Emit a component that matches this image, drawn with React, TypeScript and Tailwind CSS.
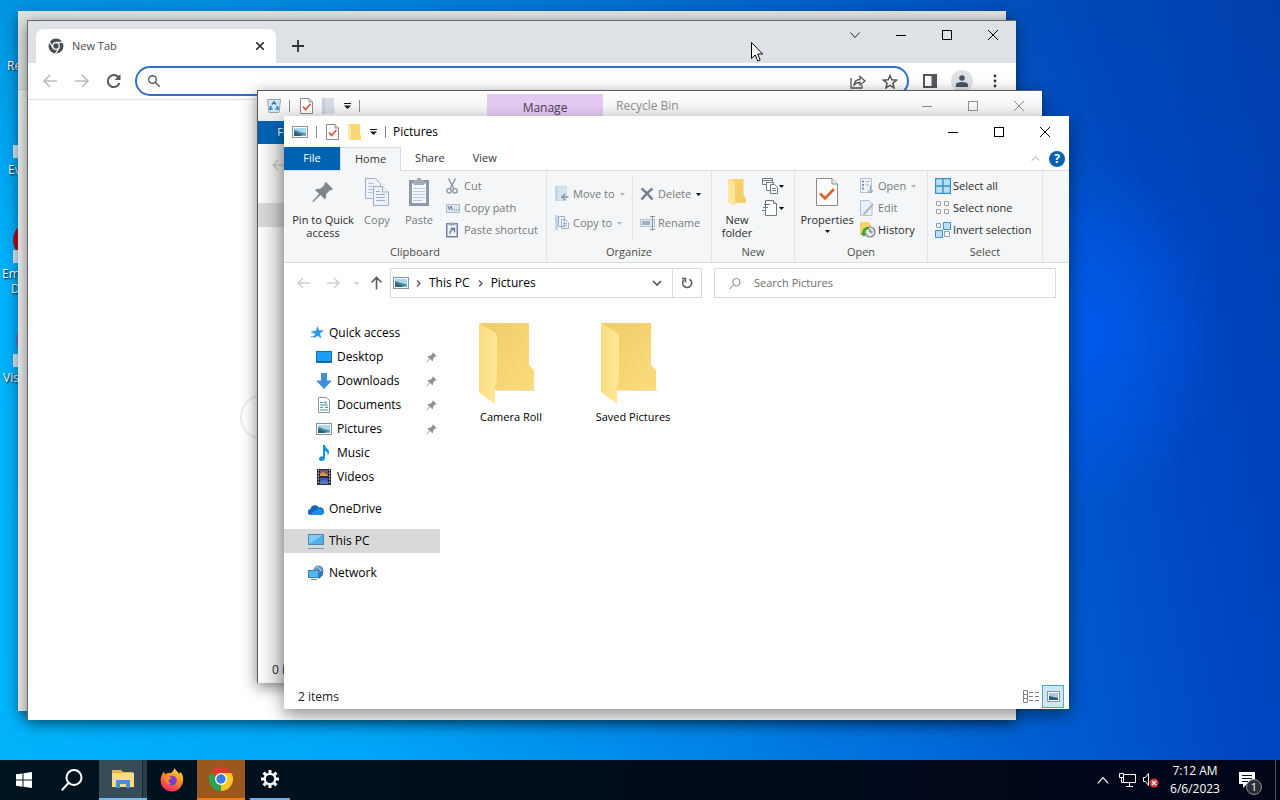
import React, { useState } from 'react';

type IconProps = { className?: string };

/* ---------- window glyphs ---------- */

function MinimizeIcon() {
  return (
    <svg width="10" height="10" viewBox="0 0 10 10" stroke="currentColor">
      <path d="M0 5.5h10" />
    </svg>
  );
}

function MaximizeIcon() {
  return (
    <svg width="10" height="10" viewBox="0 0 10 10" fill="none" stroke="currentColor">
      <rect x="0.5" y="0.5" width="9" height="9" />
    </svg>
  );
}

function CloseIcon() {
  return (
    <svg width="10" height="10" viewBox="0 0 10 10" stroke="currentColor">
      <path d="M0 0l10 10M10 0L0 10" />
    </svg>
  );
}

function Caret({ className = 'text-black' }: IconProps) {
  return (
    <svg className={`shrink-0 ${className}`} width="5" height="3" viewBox="0 0 5 3" fill="currentColor">
      <path d="M0 0h5L2.5 3z" />
    </svg>
  );
}

function ChevronDown({ className }: IconProps) {
  return (
    <svg className={className} width="10" height="6" viewBox="0 0 10 6" fill="none" stroke="currentColor">
      <path d="M0.5 0.5L5 5.5L9.5 0.5" />
    </svg>
  );
}

function WindowButtons({ className = 'text-black' }: IconProps) {
  return (
    <div className={`flex h-7 ${className}`}>
      <button aria-label="Minimize" className="flex w-[46px] items-center justify-center">
        <MinimizeIcon />
      </button>
      <button aria-label="Maximize" className="flex w-[46px] items-center justify-center">
        <MaximizeIcon />
      </button>
      <button aria-label="Close" className="flex w-[46px] items-center justify-center">
        <CloseIcon />
      </button>
    </div>
  );
}

/* ---------- explorer icons ---------- */

function PictureIcon() {
  return (
    <svg className="shrink-0" width="16" height="12" viewBox="0 0 16 12">
      <rect x="0.5" y="0.5" width="15" height="11" fill="#fff" stroke="#8a949c" />
      <rect x="2" y="2" width="12" height="8" fill="#a9d8f3" />
      <path d="M2 4c2-.5 4 1 6 2l6 1.500V10H2z" fill="#4f8aa3" />
      <path d="M2 6c2 0 4 1 5 2l5 1 2 1H2z" fill="#2f5f70" />
      <path d="M8 10c2-1.500 4-1.500 6-1.500V10z" fill="#6fb3d8" />
    </svg>
  );
}

function CheckPageIcon({ large = false }: { large?: boolean }) {
  return (
    <svg
      className="shrink-0"
      width={large ? 22 : 13}
      height={large ? 30 : 16}
      viewBox={large ? '0 0 22 30' : '0 0 13 16'}
      fill="none"
    >
      {large ? (
        <>
          <path d="M0.500 1.500H16L21.500 7v21.500H0.500z" fill="#fdfdfd" stroke="#8b8b8b" />
          <path d="M16 1.500V7h5.500" fill="#eee" stroke="#8b8b8b" />
          <path d="M4 16.500l5 5L18 12" stroke="#e0602a" strokeWidth="2.600" />
        </>
      ) : (
        <>
          <path d="M0.500 0.500H9L12.500 4v11.500H0.500z" fill="#fdfdfd" stroke="#8b8b8b" />
          <path d="M9 0.500V4h3.500" stroke="#8b8b8b" />
          <path d="M3 8.500l2.500 3L10.500 6" stroke="#cf4f38" strokeWidth="1.500" />
        </>
      )}
    </svg>
  );
}

function SmallFolderIcon({ muted = false }: { muted?: boolean }) {
  return (
    <svg className="shrink-0" width="13" height="16" viewBox="0 0 13 16">
      <path d="M0 0h12v10l1 1v5H0z" fill={muted ? '#d3dce4' : '#f8d775'} />
      <path d="M0 0l3 2v14H0z" fill={muted ? '#c3ced8' : '#ffe9a2'} />
    </svg>
  );
}

function OverflowIcon() {
  return (
    <svg className="shrink-0" width="7" height="6" viewBox="0 0 7 6">
      <path d="M0 0.500h7" stroke="#111" />
      <path d="M0 2.500h7L3.500 6z" fill="#111" />
    </svg>
  );
}

function PinIcon({ className }: IconProps) {
  return (
    <svg className={`shrink-0 ${className}`} viewBox="0 0 22 22" fill="currentColor">
      <path d="M14 1l7 7-2 1.500-1-.5-4 4.500c.5 2 .2 3.500-1 5L8.500 14 1 21.200.2 20.500 7 12.800 3 9c1.500-1.300 3-1.500 5-1l4.500-4-.5-1z" />
    </svg>
  );
}

function CopyIcon() {
  return (
    <svg width="24" height="30" viewBox="0 0 24 30" fill="#eef2f9" stroke="#a3b0c6">
      <path d="M0.500 1.500h10l5 5v15h-15z" />
      <path d="M3 6.500h6M3 9.500h9M3 12.500h9M3 15.500h5" stroke="#b5c3db" />
      <path d="M8.500 9.500h9l6 5.500v13.500h-15z" />
      <path d="M17.500 9.500V15h6M11 14.500h4M11 17.500h9M11 20.500h9M11 23.500h9" stroke="#9fb0cc" />
    </svg>
  );
}

function PasteIcon() {
  return (
    <svg width="20" height="30" viewBox="0 0 20 30" fill="none">
      <rect x="0.750" y="3.750" width="18.500" height="24.500" fill="#8e9db6" stroke="#8795ad" strokeWidth="1.500" />
      <path d="M3 6.500h14V26H3z" fill="#f4f7fb" />
      <path d="M4 11.500h12M4 14.500h12M4 17.500h12M4 20.500h12M4 23.500h9" stroke="#b9c6dc" />
      <path d="M5 3h3V1h4v2h3v5H5z" fill="#a7abb2" />
    </svg>
  );
}

function CutIcon() {
  return (
    <svg width="12" height="16" viewBox="0 0 12 16" fill="none" stroke="#8f98a5">
      <path d="M2.500 0.500L8 11M9.500 0.500L4 11" strokeWidth="1.500" />
      <circle cx="3" cy="12.800" r="2.200" strokeWidth="1.400" />
      <circle cx="9" cy="12.800" r="2.200" strokeWidth="1.400" />
    </svg>
  );
}

function CopyPathIcon() {
  return (
    <svg width="14" height="9" viewBox="0 0 14 9" fill="none">
      <rect x="0.500" y="0.500" width="13" height="8" fill="#dfe5f1" stroke="#b3bdd0" />
      <path d="M2 2l1.500 4L5 2l1.500 4M8 6h1M10 6h1M12 6h1" stroke="#6b7c9c" />
    </svg>
  );
}

function PasteShortcutIcon() {
  return (
    <svg width="12" height="16" viewBox="0 0 12 16" fill="none">
      <rect x="0.750" y="1.750" width="10.500" height="13" fill="#eef2fa" stroke="#74849f" strokeWidth="1.500" />
      <path d="M3.500 0.500h5v3h-5z" fill="#9aa5b7" />
      <path d="M4 12V9.500L7.500 7M4.500 6.500h4v4" stroke="#5f7396" strokeWidth="1.300" />
    </svg>
  );
}

function MoveToIcon() {
  return (
    <svg width="14" height="16" viewBox="0 0 14 16" fill="none">
      <path d="M0.500 0.500h11v14h-11z" fill="#d5e3ee" stroke="#c8d8e5" />
      <path d="M0 0h3v15H0z" fill="#bfd6e6" />
      <path d="M13.500 11h-6m2.500-3l-3 3 3 3" stroke="#8199b0" strokeWidth="1.600" />
    </svg>
  );
}

function CopyToIcon() {
  return (
    <svg width="14" height="16" viewBox="0 0 14 16" fill="#eef3fa">
      <path d="M0 0h3v15H0z" fill="#bfd6e6" />
      <path d="M3.500 1.500h6v10h-6zM6.500 4.500h4l3 3v6h-7z" stroke="#9fb0c8" />
      <path d="M8 8.500h4M8 10.500h4" stroke="#9fb0c8" />
    </svg>
  );
}

function DeleteIcon() {
  return (
    <svg width="14" height="14" viewBox="0 0 14 14" fill="none" stroke="#76808e" strokeWidth="2.600">
      <path d="M1.500 1.500C5 4 9 8 12.500 12.500M12.500 1.500C9 4 5 8 1.500 12.500" />
    </svg>
  );
}

function RenameIcon() {
  return (
    <svg width="16" height="14" viewBox="0 0 16 14" fill="none">
      <rect x="0.500" y="3.500" width="14" height="7" fill="#e4eaf4" stroke="#b8c4d6" />
      <path d="M2 5h8v4H2z" fill="#9fb0cb" />
      <path d="M10 0.500h5M12.500 0.500v13M10 13.500h5" stroke="#8592a6" />
    </svg>
  );
}

function NewFolderIcon() {
  return (
    <svg width="18" height="28" viewBox="0 0 18 28">
      <path d="M2 1h13.500v16l2.500 3v5H2z" fill="#f6cf6b" />
      <path d="M0 1h3l4 3v24l-5-3H0z" fill="#ffe59b" />
    </svg>
  );
}

function NewItemIcon() {
  return (
    <svg width="16" height="16" viewBox="0 0 16 16" fill="#fff" stroke="#6f7780">
      <path d="M0.500 0.500h10v6h-10z" />
      <path d="M0.500 2.500h10M4.500 4.500h7v8h-7z" />
      <path d="M8.500 6.500h4l3 3v6h-7zM10 10.500h4M10 12.500h4" />
    </svg>
  );
}

function EasyAccessIcon() {
  return (
    <svg width="16" height="16" viewBox="0 0 16 16" fill="#fff" stroke="#6f7780">
      <path d="M3.500 0.500h8l3 3v12h-11z" />
      <path d="M11.500 0.500v3h3M2 4.500h6M1 7.500h5M0 10.500h4" />
    </svg>
  );
}

function OpenIcon() {
  return (
    <svg width="14" height="16" viewBox="0 0 14 16" fill="none">
      <rect x="0.500" y="0.500" width="11" height="14" fill="#eff3f9" stroke="#b3c0d4" />
      <path d="M2 3.500h2M2 7h2M2 10.500h2" stroke="#7e90b0" strokeWidth="2" />
      <path d="M5.500 3.500h4M5.500 7h4" stroke="#a4b4cc" />
      <path d="M10.500 8v7M7.500 12l3 3 3-3" stroke="#8f9fb9" />
    </svg>
  );
}

function EditIcon() {
  return (
    <svg width="14" height="16" viewBox="0 0 14 16" fill="none">
      <path d="M0.500 0.500H9l3 3v12H0.500z" fill="#eaf0f8" stroke="#b3c0d4" />
      <path d="M13 4L5 13l-1.500 1" stroke="#9fafc5" strokeWidth="1.800" />
    </svg>
  );
}

function HistoryIcon() {
  return (
    <svg width="16" height="16" viewBox="0 0 16 16" fill="none">
      <path d="M0 0h9l2 3v10H0z" fill="#f6d26c" />
      <circle cx="10" cy="10" r="5" fill="#e4e6e8" stroke="#777d82" strokeWidth="1.200" />
      <path d="M10 7v3h2.500" stroke="#555" />
      <path d="M3 13c0-5 2-7 6-7" stroke="#3fa53a" strokeWidth="2.500" />
      <path d="M0.500 11h6L4 15z" fill="#3fa53a" />
    </svg>
  );
}

function SelectAllIcon() {
  return (
    <svg width="16" height="16" viewBox="0 0 16 16" fill="#b9e0f7" stroke="#3a8fcb">
      <path d="M0.500 0.500h15v15h-15zM8 0.500v15M0.500 8h15" strokeWidth="1.400" />
    </svg>
  );
}

function SelectNoneIcon() {
  return (
    <svg width="16" height="16" viewBox="0 0 16 16" fill="#fff" stroke="#a3a3a3">
      <path d="M1.500 1.500h4v4h-4zM9.500 1.500h4v4h-4zM1.500 9.500h4v4h-4zM9.500 9.500h4v4h-4z" />
    </svg>
  );
}

function InvertIcon() {
  return (
    <svg width="16" height="16" viewBox="0 0 16 16">
      <path d="M8.500 0.500h7v7h-7zM0.500 8.500h7v7h-7z" fill="#b9e0f7" stroke="#3a8fcb" />
      <path d="M1.500 1.500h4v4h-4zM9.500 9.500h5v5h-5z" fill="#fff" stroke="#8fa3b5" />
    </svg>
  );
}

function FolderIcon() {
  return (
    <svg width="64" height="82" viewBox="0 0 64 82" aria-hidden="true">
      <defs>
        <linearGradient id="folderBack" x1="0" y1="0" x2="1" y2="1">
          <stop offset="0" stopColor="#efcb68" />
          <stop offset="1" stopColor="#fbdc7c" />
        </linearGradient>
        <linearGradient id="folderFlap" x1="0" y1="0" x2="1" y2="0">
          <stop offset="0" stopColor="#fbdd80" />
          <stop offset="1" stopColor="#ffe798" />
        </linearGradient>
      </defs>
      <path d="M0 0h50v42l5 5v20H14z" fill="url(#folderBack)" />
      <path d="M17 67.500h40" stroke="#cfc7b0" strokeOpacity=".5" />
      <path d="M0 0l15 9c2 1 3 3 3 5v44l-2 4v19L0 69z" fill="url(#folderFlap)" />
    </svg>
  );
}

function StarIcon() {
  return (
    <svg width="16" height="14" viewBox="0 0 16 14">
      <path d="M9.500 0l1.600 4.300H16l-4 3.200 1.500 5-4-2.800L5.500 12.500l1.300-4.800L3 5h4.700z" fill="#2c9be0" />
      <path d="M3 7h3M3 10.500h3" stroke="#5aaee2" />
    </svg>
  );
}

function DesktopIcon() {
  return (
    <svg width="16" height="12" viewBox="0 0 16 12">
      <rect x="0.500" y="0.500" width="15" height="11" fill="#1e9df1" stroke="#1471b8" />
      <path d="M1 10.500h14" stroke="#0f5f9f" />
    </svg>
  );
}

function DownloadsIcon() {
  return (
    <svg width="16" height="16" viewBox="0 0 16 16">
      <path d="M5 0h6v7.500h5L8 16 0 7.500h5z" fill="#3f8fdc" />
    </svg>
  );
}

function DocumentsIcon() {
  return (
    <svg width="16" height="16" viewBox="0 0 16 16" fill="none">
      <path d="M2.500 0.500h8l3 3v12h-11z" fill="#fff" stroke="#8a949c" />
      <path d="M4 5.500h3M4 8h8M4 10.500h3M9 10.500h3M4 13h8" stroke="#3d9c96" />
      <path d="M8 4.500h3v2H8z" fill="#62aee0" />
    </svg>
  );
}

function MusicIcon() {
  return (
    <svg width="16" height="16" viewBox="0 0 16 16">
      <path d="M7 0h2c0 3 4 4 4 7 0 1.500-.5 2.500-1.200 3.500C12 8 10.500 6.500 9 6v7c0 2-1.500 3-3.300 3S3 15 3 13.700c0-1.700 2-2.700 4-2.200z" fill="#1693e0" />
    </svg>
  );
}

function VideosIcon() {
  return (
    <svg width="16" height="16" viewBox="0 0 16 16">
      <rect x="1" y="0" width="14" height="16" fill="#2b2d36" />
      <path d="M2.500 0.500v15M13.500 0.500v15" stroke="#d8d8d8" strokeDasharray="1.500 1.500" />
      <rect x="4" y="1" width="8" height="6" fill="#7a5668" />
      <path d="M4 5l3-2 5 3v1H4z" fill="#d09d45" />
      <rect x="4" y="9" width="8" height="6" fill="#3f57b5" />
      <path d="M4 13l4-2 4 2v2H4z" fill="#5a78c8" />
    </svg>
  );
}

function OneDriveIcon() {
  return (
    <svg width="16" height="11" viewBox="0 0 16 11">
      <path d="M3 11a3 3 0 01-.5-6A4.600 4.600 0 0111 3.500 3.800 3.800 0 0113 11z" fill="#1068bd" />
      <path d="M2 10.700L9 5c3-.8 6.500.5 7 3.200A2.700 2.700 0 0113.200 11H3z" fill="#1f8de0" />
    </svg>
  );
}

function ThisPcIcon() {
  return (
    <svg width="16" height="15" viewBox="0 0 16 15">
      <rect x="0.500" y="0.500" width="15" height="10" fill="#7fcdf6" stroke="#4d88ad" />
      <path d="M1 10L15 1v9z" fill="#4cb0ec" />
      <path d="M0 14.500h16" stroke="#7c98ad" />
    </svg>
  );
}

function NetworkIcon() {
  return (
    <svg width="16" height="16" viewBox="0 0 16 16">
      <circle cx="10.500" cy="5.500" r="5" fill="#5f94bd" />
      <path d="M8 2c2 0 4 1 5 4" stroke="#b5d6ea" fill="none" />
      <path d="M8 9l7-3v4l-4 4z" fill="#2f78b5" />
      <rect x="0.500" y="5.500" width="10" height="7" fill="#55b5f0" stroke="#3a7fae" />
      <path d="M3 14.500h6" stroke="#6a8da5" />
    </svg>
  );
}

function RecycleIcon() {
  return (
    <svg className="shrink-0" width="14" height="16" viewBox="0 0 14 16">
      <path d="M0.500 1.500h13l-1.500 13H2z" fill="#d4e6f1" stroke="#8ea5b3" />
      <path d="M5 6.500L7 4l2 2.500M10 8l1 3H8.500M5.500 11H3l1-3" stroke="#1f7cc7" strokeWidth="1.600" fill="none" />
    </svg>
  );
}

function RefreshIcon() {
  return (
    <svg width="12" height="12" viewBox="0 0 12 12" fill="none" stroke="#5b5b5b" strokeWidth="1.600">
      <path d="M8.500 2.200A4.500 4.500 0 113 2.800" />
      <path d="M1 1.500h3.500v4" />
    </svg>
  );
}

/* ---------- ribbon ---------- */

type RibbonButtonProps = {
  icon: React.ReactNode;
  label: string;
  disabled?: boolean;
  caret?: boolean;
  caretClass?: string;
};

function RibbonButton({ icon, label, disabled = false, caret = false, caretClass }: RibbonButtonProps) {
  return (
    <button
      disabled={disabled}
      className={`flex h-[22px] items-center whitespace-nowrap ${disabled ? 'text-[#76797d]' : 'text-[#2b2b2b]'}`}
    >
      <span className="flex w-[18px] shrink-0 items-center justify-start">{icon}</span>
      {label}
      {caret && <Caret className={`ml-[5px] ${caretClass ?? 'text-[#b5b8bc]'}`} />}
    </button>
  );
}

type LargeButtonProps = {
  icon: React.ReactNode;
  lines: string[];
  width: string;
  disabled?: boolean;
  caret?: boolean;
};

function LargeButton({ icon, lines, width, disabled = false, caret = false }: LargeButtonProps) {
  return (
    <button
      disabled={disabled}
      className={`flex flex-col items-center ${width} ${disabled ? 'text-[#76797d]' : 'text-[#2b2b2b]'}`}
    >
      <span className="mb-1 flex h-[34px] items-center">{icon}</span>
      {lines.map((line) => (
        <span key={line} className="leading-[13px] whitespace-nowrap">
          {line}
        </span>
      ))}
      {caret && <Caret className="mt-1 text-black" />}
    </button>
  );
}

function RibbonGroup({ title, width, children }: { title: string; width: string; children: React.ReactNode }) {
  return (
    <section className={`flex flex-col border-r border-[#e2e3e4] ${width}`} aria-label={title}>
      <div className="flex h-[72px] pt-1">{children}</div>
      <div className="pt-px text-center leading-5 text-[#4c4c4c]">{title}</div>
    </section>
  );
}

function Ribbon() {
  return (
    <div className="flex h-[92px] border-b border-[#dadbdc] bg-[#f5f6f7] text-[11px]">
      <RibbonGroup title="Clipboard" width="w-[263px]">
        <LargeButton
          width="w-[78px]"
          icon={<PinIcon className="h-[22px] w-[22px] text-[#80868c]" />}
          lines={['Pin to Quick', 'access']}
        />
        <LargeButton width="w-[30px]" disabled icon={<CopyIcon />} lines={['Copy']} />
        <LargeButton width="w-[54px]" disabled icon={<PasteIcon />} lines={['Paste']} />
        <div className="flex flex-col">
          <RibbonButton disabled icon={<CutIcon />} label="Cut" />
          <RibbonButton disabled icon={<CopyPathIcon />} label="Copy path" />
          <RibbonButton disabled icon={<PasteShortcutIcon />} label="Paste shortcut" />
        </div>
      </RibbonGroup>
      <RibbonGroup title="Organize" width="w-[165px]">
        <div className="flex w-[86px] flex-col gap-[7px] border-r border-[#e2e3e4] pt-2 pl-2">
          <RibbonButton disabled caret icon={<MoveToIcon />} label="Move to" />
          <RibbonButton disabled caret icon={<CopyToIcon />} label="Copy to" />
        </div>
        <div className="flex flex-col gap-[7px] pt-2 pl-[7px]">
          <RibbonButton disabled caret caretClass="text-black" icon={<DeleteIcon />} label="Delete" />
          <RibbonButton disabled icon={<RenameIcon />} label="Rename" />
        </div>
      </RibbonGroup>
      <RibbonGroup title="New" width="w-[83px]">
        <LargeButton width="w-[50px]" icon={<NewFolderIcon />} lines={['New', 'folder']} />
        <div className="flex flex-col">
          <button aria-label="New item" className="flex h-[22px] items-center gap-px">
            <NewItemIcon />
            <Caret />
          </button>
          <button aria-label="Easy access" className="flex h-[22px] items-center gap-px">
            <EasyAccessIcon />
            <Caret />
          </button>
        </div>
      </RibbonGroup>
      <RibbonGroup title="Open" width="w-[133px]">
        <LargeButton width="w-16" caret icon={<CheckPageIcon large />} lines={['Properties']} />
        <div className="flex flex-col pl-px">
          <RibbonButton disabled caret icon={<OpenIcon />} label="Open" />
          <RibbonButton disabled icon={<EditIcon />} label="Edit" />
          <RibbonButton icon={<HistoryIcon />} label="History" />
        </div>
      </RibbonGroup>
      <RibbonGroup title="Select" width="w-[115px]">
        <div className="flex flex-col pl-[7px]">
          <RibbonButton icon={<SelectAllIcon />} label="Select all" />
          <RibbonButton icon={<SelectNoneIcon />} label="Select none" />
          <RibbonButton icon={<InvertIcon />} label="Invert selection" />
        </div>
      </RibbonGroup>
    </div>
  );
}

/* ---------- pictures window ---------- */

const QUICK_ACCESS = [
  { label: 'Desktop', icon: <DesktopIcon />, pinned: true },
  { label: 'Downloads', icon: <DownloadsIcon />, pinned: true },
  { label: 'Documents', icon: <DocumentsIcon />, pinned: true },
  { label: 'Pictures', icon: <PictureIcon />, pinned: true },
  { label: 'Music', icon: <MusicIcon />, pinned: false },
  { label: 'Videos', icon: <VideosIcon />, pinned: false },
];

const FOLDERS = ['Camera Roll', 'Saved Pictures'];

type TreeItemProps = {
  icon: React.ReactNode;
  label: string;
  nested?: boolean;
  pinned?: boolean;
  selected?: boolean;
};

function TreeItem({ icon, label, nested = false, pinned = false, selected = false }: TreeItemProps) {
  return (
    <button
      className={`flex h-6 w-full items-center pr-[3px] text-left ${nested ? 'pl-8' : 'pl-6'} ${selected ? 'bg-[#d9d9d9]' : ''}`}
    >
      <span className="flex w-4 shrink-0 justify-center">{icon}</span>
      <span className="ml-[5px] flex-1">{label}</span>
      {pinned && <PinIcon className="h-[11px] w-[11px] text-[#8d9196]" />}
    </button>
  );
}

function NavigationPane() {
  return (
    <nav className="flex w-[156px] flex-col gap-2 pt-[18px]">
      <div>
        <TreeItem icon={<StarIcon />} label="Quick access" />
        {QUICK_ACCESS.map((item) => (
          <TreeItem key={item.label} nested {...item} />
        ))}
      </div>
      <TreeItem icon={<OneDriveIcon />} label="OneDrive" />
      <TreeItem icon={<ThisPcIcon />} label="This PC" selected />
      <TreeItem icon={<NetworkIcon />} label="Network" />
    </nav>
  );
}

function AddressBar() {
  return (
    <div className="flex h-10 items-center pr-[13px] pl-3 text-[#222]">
      <button aria-label="Back" className="flex w-[30px] text-[#d0d0d0]">
        <svg className="ml-px" width="14" height="12" viewBox="0 0 14 12" fill="none" stroke="currentColor" strokeWidth="1.500">
          <path d="M13 6H1.500M6 1L1 6l5 5" />
        </svg>
      </button>
      <button aria-label="Forward" className="flex w-7 text-[#d0d0d0]">
        <svg width="14" height="12" viewBox="0 0 14 12" fill="none" stroke="currentColor" strokeWidth="1.500">
          <path d="M1 6h11.500M8 1l5 5-5 5" />
        </svg>
      </button>
      <button aria-label="Recent locations" className="flex w-4">
        <Caret className="text-[#c8c8c8]" />
      </button>
      <button aria-label="Up" className="flex w-5 text-[#5a5a5a]">
        <svg width="13" height="14" viewBox="0 0 13 14" fill="none" stroke="currentColor" strokeWidth="1.600">
          <path d="M6.500 13.500V1.500M1.500 6.500l5-5 5 5" />
        </svg>
      </button>
      <div className="flex h-[30px] w-[312px] border border-[#d9d9d9]">
        <div className="flex flex-1 items-center pl-[2px]">
          <PictureIcon />
          <ol className="flex flex-1 items-center">
            {['This PC', 'Pictures'].map((part) => (
              <li key={part} className="flex items-center">
                <svg className="mx-[7px]" width="5" height="7" viewBox="0 0 5 7" fill="none" stroke="#555" strokeWidth="1.300">
                  <path d="M1 0.500l3 3-3 3" />
                </svg>
                <a href="#" className="pr-px pl-px text-black">
                  {part}
                </a>
              </li>
            ))}
          </ol>
          <button aria-label="Previous locations" className="flex w-[30px] justify-center text-[#555]">
            <svg width="10" height="7" viewBox="0 0 10 7" fill="none" stroke="currentColor" strokeWidth="1.700">
              <path d="M1 1l4 4 4-4" />
            </svg>
          </button>
        </div>
        <button aria-label="Refresh" className="flex w-[29px] items-center justify-center border-l border-[#d9d9d9]">
          <RefreshIcon />
        </button>
      </div>
      <label className="ml-3 flex h-[30px] flex-1 items-center border border-[#d9d9d9] pl-[14px]">
        <svg width="13" height="13" viewBox="0 0 13 13" fill="none" stroke="#7b7b7b">
          <circle cx="8" cy="5" r="4" />
          <path d="M5 8L0.500 12.500" />
        </svg>
        <input
          aria-label="Search Pictures"
          placeholder="Search Pictures"
          className="ml-[13px] w-full min-w-0 text-[11px] outline-none placeholder:text-[#6d6d6d]"
        />
      </label>
    </div>
  );
}

function PicturesWindow() {
  const [tab, setTab] = useState('Home');

  return (
    <main className="absolute top-[116px] left-[284px] flex h-[593px] w-[785px] flex-col bg-white shadow-[0_6px_16px_rgba(0,0,0,0.45)]">
      <header className="flex h-[31px] items-center pl-2">
        <PictureIcon />
        <span className="mx-2 h-3 border-l border-[#8a8a8a]" />
        <button aria-label="Properties" className="ml-px flex">
          <CheckPageIcon />
        </button>
        <button aria-label="New folder" className="mx-[9px] flex">
          <SmallFolderIcon />
        </button>
        <button aria-label="Customize toolbar" className="flex">
          <OverflowIcon />
        </button>
        <span className="mr-[7px] ml-2 h-3 border-l border-[#8a8a8a]" />
        <h1 className="flex-1 text-black">Pictures</h1>
        <WindowButtons className="mr-px text-black" />
      </header>

      <div className="flex h-6 items-stretch border-b border-[#dadbdc] text-[11px]">
        <button className="w-14 bg-[#0063b1] text-white">File</button>
        {['Home', 'Share', 'View'].map((name) => (
          <button
            key={name}
            onClick={() => setTab(name)}
            className={`px-[14px] text-[#333] ${
              tab === name ? '-mb-px border-x border-t border-[#dadbdc] bg-[#f5f6f7]' : ''
            }`}
          >
            {name}
          </button>
        ))}
        <div className="flex flex-1 items-center justify-end gap-[9px] pr-1">
          <button aria-label="Minimize the ribbon" className="text-[#999]">
            <ChevronDown className="h-[5px] w-[9px] rotate-180" />
          </button>
          <button
            aria-label="Help"
            className="flex h-4 w-4 items-center justify-center rounded-full bg-[#0563b0] text-[12px] font-bold text-white"
          >
            ?
          </button>
        </div>
      </div>

      <Ribbon />
      <AddressBar />

      <div className="flex flex-1">
        <NavigationPane />
        <ul className="flex flex-1 pt-5 pl-[10px]">
          {FOLDERS.map((name) => (
            <li key={name} className="flex w-[122px] flex-col items-center">
              <FolderIcon />
              <span className="mt-1 text-[11px] leading-4 text-black">{name}</span>
            </li>
          ))}
        </ul>
      </div>

      <footer className="flex h-[26px] items-center pr-[5px] pl-[14px] text-[#222]">
        <span className="flex-1 pt-[2px]">2 items</span>
        <button aria-label="Details view" className="mr-[3px]">
          <svg width="16" height="13" viewBox="0 0 16 13" fill="none" stroke="#808080">
            <path d="M0.500 0.500h4v12h-4zM0.500 4.500h4M0.500 8.500h4" />
            <path d="M6 2.500h4M12 2.500h4M6 6.500h4M12 6.500h4M6 10.500h4M12 10.500h4" />
          </svg>
        </button>
        <button
          aria-label="Large icons view"
          className="flex h-[23px] w-[22px] items-center justify-center border border-[#4ba6d3] bg-[#cce8f6]"
        >
          <svg width="13" height="11" viewBox="0 0 13 11">
            <rect x="0.500" y="0.500" width="12" height="10" fill="#fff" stroke="#8a949c" />
            <path d="M2 2h9v7H2z" fill="#9fcbe6" />
            <path d="M2 5l4 1 5 1v2H2z" fill="#31596c" />
          </svg>
        </button>
      </footer>
    </main>
  );
}

/* ---------- recycle bin window ---------- */

function RecycleBinWindow() {
  return (
    <section
      aria-label="Recycle Bin"
      className="absolute top-[90px] left-[257px] flex h-[593px] w-[785px] flex-col border-t border-l border-[#5b5b5b] bg-white shadow-[0_4px_14px_rgba(0,0,0,0.5)]"
    >
      <header className="flex h-[30px] items-center bg-linear-to-b from-white to-[#ededed] pl-[9px]">
        <RecycleIcon />
        <span className="mr-[10px] ml-2 h-3 border-l border-[#8a8a8a]" />
        <CheckPageIcon />
        <span className="mx-[9px] flex">
          <SmallFolderIcon muted />
        </span>
        <OverflowIcon />
        <span className="ml-2 h-3 border-l border-[#8a8a8a]" />
        <div className="ml-[127px] h-full w-[116px] pt-[3px]">
          <button className="h-full w-full bg-[#e4c9f3] text-[#4c3c55]">Manage</button>
        </div>
        <h2 className="ml-[13px] flex-1 text-[#8d8d8d]">Recycle Bin</h2>
        <WindowButtons className="text-[#8d8d8d]" />
      </header>
      <button className="h-[23px] w-14 bg-[#0063b1] text-[11px] text-white">File</button>
      <div className="flex flex-1 flex-col bg-linear-to-r from-white from-0% to-[#d9d9d9] to-[26px]">
        <svg className="mt-[15px] ml-[14px]" width="14" height="12" viewBox="0 0 14 12" fill="none" stroke="#bdbdbd" strokeWidth="1.300">
          <path d="M13 6H1.500M6 1L1 6l5 5" />
        </svg>
        <div className="mt-8 h-6 w-40 bg-linear-to-r from-[#d9d9d9] to-[#c2c2c2] to-[26px]" />
      </div>
      <footer className="h-[22px] bg-linear-to-r from-white from-0% to-[#d9d9d9] to-[26px] pl-[14px] text-[#222]">0 items</footer>
    </section>
  );
}

/* ---------- browser window ---------- */

function ChromeMark({ className }: IconProps) {
  return (
    <svg className={className} viewBox="0 0 16 16" fill="none">
      <circle cx="8" cy="8" r="7.500" fill="#4b4f54" />
      <circle cx="8" cy="8" r="3.900" fill="#fff" />
      <circle cx="8" cy="8" r="2.700" fill="#4b4f54" />
      <path d="M8 4.400h7.200M5 10L1.400 3.900M11 10l-3.600 6" stroke="#fff" strokeWidth="1.200" />
    </svg>
  );
}

function BrowserWindow() {
  return (
    <section
      aria-label="Browser"
      className="absolute top-5 left-[27px] flex h-[700px] w-[989px] flex-col border-t border-l border-[#66696d] bg-white shadow-[0_4px_14px_rgba(0,0,0,0.5)]"
    >
      <header className="flex h-[42px] bg-[#dee1e6]">
        <div className="mt-2 ml-2 flex h-[34px] w-[240px] items-center rounded-t-lg bg-white px-3">
          <ChromeMark className="h-4 w-4" />
          <span className="ml-2 flex-1 text-[11px] text-[#45494d]">New Tab</span>
          <button aria-label="Close tab" className="text-[#333]">
            <svg width="8" height="8" viewBox="0 0 8 8" stroke="currentColor" strokeWidth="1.600">
              <path d="M0 0l8 8M8 0L0 8" />
            </svg>
          </button>
        </div>
        <button aria-label="New tab" className="mt-2 ml-4 flex h-[34px] items-center text-[#333]">
          <svg width="12" height="12" viewBox="0 0 12 12" stroke="currentColor" strokeWidth="1.800">
            <path d="M6 0v12M0 6h12" />
          </svg>
        </button>
        <div className="flex flex-1 justify-end">
          <button aria-label="Search tabs" className="flex h-7 w-[46px] items-center justify-center text-[#222]">
            <ChevronDown />
          </button>
          <WindowButtons />
        </div>
      </header>

      <div className="flex h-[37px] items-center border-b border-[#e0e0e0] pr-[19px] pl-[14px] text-[#55595e]">
        <button aria-label="Back" className="w-8 text-[#babcbe]">
          <svg width="16" height="14" viewBox="0 0 16 14" fill="none" stroke="currentColor" strokeWidth="1.700">
            <path d="M15 7H2M8 1L2 7l6 6" />
          </svg>
        </button>
        <button aria-label="Forward" className="w-8 text-[#babcbe]">
          <svg width="16" height="14" viewBox="0 0 16 14" fill="none" stroke="currentColor" strokeWidth="1.700">
            <path d="M1 7h13M8 1l6 6-6 6" />
          </svg>
        </button>
        <button aria-label="Reload" className="w-[29px]">
          <svg width="16" height="16" viewBox="0 0 16 16" fill="none" stroke="currentColor" strokeWidth="2">
            <path d="M13.500 10A6 6 0 1112.300 4" />
            <path d="M14.500 1v6h-6z" fill="currentColor" stroke="none" />
          </svg>
        </button>
        <label className="flex h-[30px] flex-1 items-center rounded-full border-2 border-[#2f6fd0] pr-[9px] pl-[11px]">
          <svg width="12" height="12" viewBox="0 0 12 12" fill="none" stroke="currentColor" strokeWidth="1.400">
            <circle cx="4.500" cy="4.500" r="3.800" />
            <path d="M7.300 7.300l4.500 4.500" />
          </svg>
          <input aria-label="Address and search bar" className="min-w-0 flex-1 outline-none" />
          <button aria-label="Share">
            <svg width="16" height="15" viewBox="0 0 16 15" fill="none" stroke="currentColor" strokeWidth="1.300">
              <path d="M1 4v10h11v-3" />
              <path d="M4 11c.5-4 3-5.500 6-5.500V2.500L15 7l-5 4V8.500c-3 0-4.500.5-6 2.500z" />
            </svg>
          </button>
          <button aria-label="Bookmark" className="ml-4">
            <svg width="16" height="15" viewBox="0 0 16 15" fill="none" stroke="currentColor" strokeWidth="1.500">
              <path d="M8 1.500l1.800 4.300 4.700.4-3.600 3 1.100 4.600-4-2.500-4 2.500 1.100-4.600-3.600-3 4.700-.4z" />
            </svg>
          </button>
        </label>
        <button aria-label="Side panel" className="ml-[14px]">
          <svg width="14" height="14" viewBox="0 0 14 14" fill="none" stroke="currentColor">
            <path d="M1 1h12v12H1z" strokeWidth="2" />
            <path d="M9 1h4v12H9z" fill="currentColor" />
          </svg>
        </button>
        <button aria-label="Profile" className="ml-[14px] flex h-[22px] w-[22px] items-center justify-center rounded-full bg-[#dfe1e5]">
          <svg width="12" height="12" viewBox="0 0 12 12" fill="#4b5563">
            <circle cx="6" cy="3" r="2.800" />
            <path d="M0 12V9.500C0 8 3 7 6 7s6 1 6 2.500V12z" />
          </svg>
        </button>
        <button aria-label="Menu" className="ml-[20px]">
          <svg width="4" height="14" viewBox="0 0 4 14" fill="#333">
            <circle cx="2" cy="2" r="1.400" />
            <circle cx="2" cy="7" r="1.400" />
            <circle cx="2" cy="12" r="1.400" />
          </svg>
        </button>
      </div>

      <div className="flex flex-1 justify-center pt-[294px]">
        <input
          aria-label="Search the web"
          className="h-[46px] w-[564px] rounded-full border-2 border-[#ececec] bg-white"
        />
      </div>
    </section>
  );
}

/* ---------- desktop ---------- */

const SHORTCUTS = [
  { top: 'top-[58px]', left: 'left-[7px]', lines: ['Re'] },
  { top: 'top-[162px]', left: 'left-2', lines: ['Ev'] },
  { top: 'top-[266px]', left: 'left-[2px]', lines: ['Em', 'D'] },
  { top: 'top-[370px]', left: 'left-[3px]', lines: ['Vis'] },
];

function DesktopShortcuts() {
  return (
    <>
      <div className="absolute top-[145px] left-[13px] h-[13px] w-3 bg-[#d7e9f5]" />
      <div className="absolute top-[222px] left-[13px] h-9 w-9 rounded-full bg-[#b0101c]" />
      <div className="absolute top-[250px] left-[13px] h-[13px] w-3 bg-[#d7e9f5]" />
      <div className="absolute top-[323px] left-4 h-9 w-9 rounded-full bg-[#7b68c4]" />
      <div className="absolute top-[354px] left-[13px] h-[13px] w-3 bg-[#d7e9f5]" />
      {SHORTCUTS.map((s) => (
        <div
          key={s.top}
          className={`absolute ${s.top} ${s.left} text-right leading-[15px] text-white [text-shadow:1px_1px_2px_#000]`}
        >
          {s.lines.map((line) => (
            <div key={line}>{line}</div>
          ))}
        </div>
      ))}
    </>
  );
}

/* ---------- taskbar ---------- */

function Taskbar() {
  return (
    <footer className="flex h-10 items-stretch bg-linear-to-r from-[#00141f] to-[#000518] text-white">
      <button aria-label="Start" className="flex w-12 items-center justify-center">
        <svg width="16" height="16" viewBox="0 0 16 16" fill="#fff">
          <path d="M0 2.300L6.500 1.400v6.200H0zM7.500 1.200L16 0v7.600H7.500zM0 8.500h6.500v6.200L0 13.800zM7.500 8.500H16V16l-8.500-1.200z" />
        </svg>
      </button>
      <button aria-label="Search" className="flex w-12 items-center justify-center">
        <svg width="22" height="22" viewBox="0 0 22 22" fill="none" stroke="#fff" strokeWidth="2">
          <circle cx="13" cy="8.500" r="7.500" />
          <path d="M7.500 14L0.800 21.200" />
        </svg>
      </button>
      <button
        aria-label="File Explorer"
        className="ml-[3px] flex w-12 items-center justify-center border-b-2 border-[#76b9ed] bg-[linear-gradient(90deg,#364c58_0_43px,#14262f_43px_44px,#2a3f4a_44px)]"
      >
        <svg width="22" height="20" viewBox="0 0 22 20">
          <path d="M0 1h9l2 2h10v15H0z" fill="#e9b64a" />
          <path d="M0 4h22v14H0z" fill="#fbdb83" />
          <path d="M4 19v-8h14v8h-4v-4H8v4z" fill="#4592cf" />
        </svg>
      </button>
      <button aria-label="Firefox" className="ml-px flex w-12 items-center justify-center">
        <svg width="24" height="24" viewBox="0 0 24 24">
          <defs>
            <linearGradient id="fox" x1="0.800" y1="0" x2="0.300" y2="1">
              <stop offset="0" stopColor="#ffe14a" />
              <stop offset="0.450" stopColor="#ff8a1e" />
              <stop offset="1" stopColor="#f2246a" />
            </linearGradient>
          </defs>
          <path
            d="M14.500 0c1 2.500 3.500 3.500 4.500 6l1.500-2c2.500 3 3 6 2.500 9.500C22 19.500 17.500 23.500 12 23.500S1 19.500.6 13C.3 9 2 6 4 3.500L5 6.500C7 4.500 9.500 5 11 5c1-1 2.500-2 3.500-5z"
            fill="url(#fox)"
          />
          <circle cx="12" cy="12.500" r="4.800" fill="#7b3fc9" />
          <path d="M5 8.500c3-1.500 5 .5 7 1-.5 1.500-3 1.500-3.500 3 0 1.500 1 3 3 3-3 1.500-7.500-1-6.500-7z" fill="#ff8f24" />
        </svg>
      </button>
      <button
        aria-label="Chrome"
        className="ml-px flex w-12 items-center justify-center border-b-2 border-[#f57a10] bg-[#9a581d]"
      >
        <svg width="24" height="24" viewBox="0 0 24 24">
          <path d="M12 12L1.600 6A12 12 0 0122.400 6z" fill="#e03a2f" />
          <path d="M12 12h0L22.400 6A12 12 0 0112 24z" fill="#fbc524" />
          <path d="M12 12v12A12 12 0 011.600 6z" fill="#2ca24c" />
          <path d="M12 6h10.400L17.500 15 12 24l5-9z" fill="#fbc524" />
          <circle cx="12" cy="12" r="6" fill="#fff" />
          <circle cx="12" cy="12" r="4.700" fill="#3a7be8" />
        </svg>
      </button>
      <button
        aria-label="Settings"
        className="ml-[5px] flex w-10 items-center justify-center border-b-2 border-[#76a9dd]"
      >
        <svg width="18" height="18" viewBox="0 0 18 18" fill="none" stroke="#fff">
          <circle cx="9" cy="9" r="5.200" strokeWidth="2.200" />
          <path
            d="M9 0v3.500M9 14.500V18M0 9h3.500M14.500 9H18M2.600 2.600l2.500 2.500M12.900 12.900l2.500 2.500M15.400 2.600l-2.500 2.500M5.100 12.900l-2.500 2.500"
            strokeWidth="3"
          />
        </svg>
      </button>

      <div className="flex flex-1 items-center justify-end">
        <button aria-label="Show hidden icons">
          <ChevronDown className="h-[7px] w-3 rotate-180" />
        </button>
        <button aria-label="Network" className="ml-[10px]">
          <svg width="17" height="14" viewBox="0 0 17 14" fill="none" stroke="#fff">
            <path d="M4.500 1.500h12v8h-12zM10.500 9.500v4M7 13.500h7" />
            <path d="M0.500 0.500h4v4h-4zM2.500 4.500v5h2" fill="#00141f" />
          </svg>
        </button>
        <button aria-label="Volume muted" className="ml-[6px]">
          <svg width="18" height="16" viewBox="0 0 18 16" fill="none">
            <path d="M1.500 5.500h2l3-4v12l-3-4h-2z" stroke="#fff" />
            <circle cx="12" cy="11" r="4.500" fill="#d2373b" />
            <path d="M10 9l4 4M14 9l-4 4" stroke="#fff" strokeWidth="1.200" />
          </svg>
        </button>
        <button className="ml-[10px] w-[50px] text-center leading-[18px] whitespace-nowrap">
          <span className="block">7:12 AM</span>
          <span className="block">6/6/2023</span>
        </button>
        <button aria-label="Notifications, 1 new" className="relative mr-3 ml-[19px] flex h-10 w-6 items-center">
          <svg width="16" height="18" viewBox="0 0 16 18">
            <path d="M0 1h16v12H8l-4 4v-4H0z" fill="#fff" />
            <path d="M3 4.500h10M3 7.500h10M3 10.500h6" stroke="#00141f" />
          </svg>
          <span className="absolute top-[19px] left-[7px] flex h-4 w-4 items-center justify-center rounded-full border border-[#8b8f94] bg-[#2b2f36] text-[11px]">
            1
          </span>
        </button>
        <span className="mr-1 h-10 border-l border-[#4a4f5c]" />
      </div>
    </footer>
  );
}

export default function App() {
  return (
    <div className="flex min-h-screen flex-col overflow-hidden font-['Open_Sans','Noto_Sans',sans-serif] text-[12px] select-none">
      <div className="relative flex-1 overflow-hidden bg-[radial-gradient(ellipse_130px_180px_at_85%_44%,#005aeb_0%,rgba(0,80,220,0)_100%),linear-gradient(180deg,rgba(0,70,150,0.25)_0%,rgba(0,70,150,0)_35%),linear-gradient(80deg,#00b4fb_0%,#00a6f8_25%,#0083e6_50%,#005cd0_75%,#0047c2_88%,#003db2_100%)]">
        <DesktopShortcuts />
        {/* inactive window at the bottom of the stack */}
        <div className="absolute top-[11px] left-[18px] h-[700px] w-[988px] bg-[#e0e2e2] pt-[78px] shadow-[0_4px_12px_rgba(0,0,0,0.4)]">
          <div className="h-full border-t border-[#c6c8c8] bg-[#ecedec]" />
        </div>
        <BrowserWindow />
        <RecycleBinWindow />
        <PicturesWindow />
        <svg className="absolute top-[42px] left-[751px]" width="13" height="20" viewBox="0 0 13 20">
          <path d="M0.500 0.500v16l3.700-3.500 2.600 6 2.400-1-2.600-6h5z" fill="#fff" stroke="#000" />
        </svg>
      </div>
      <Taskbar />
    </div>
  );
}
